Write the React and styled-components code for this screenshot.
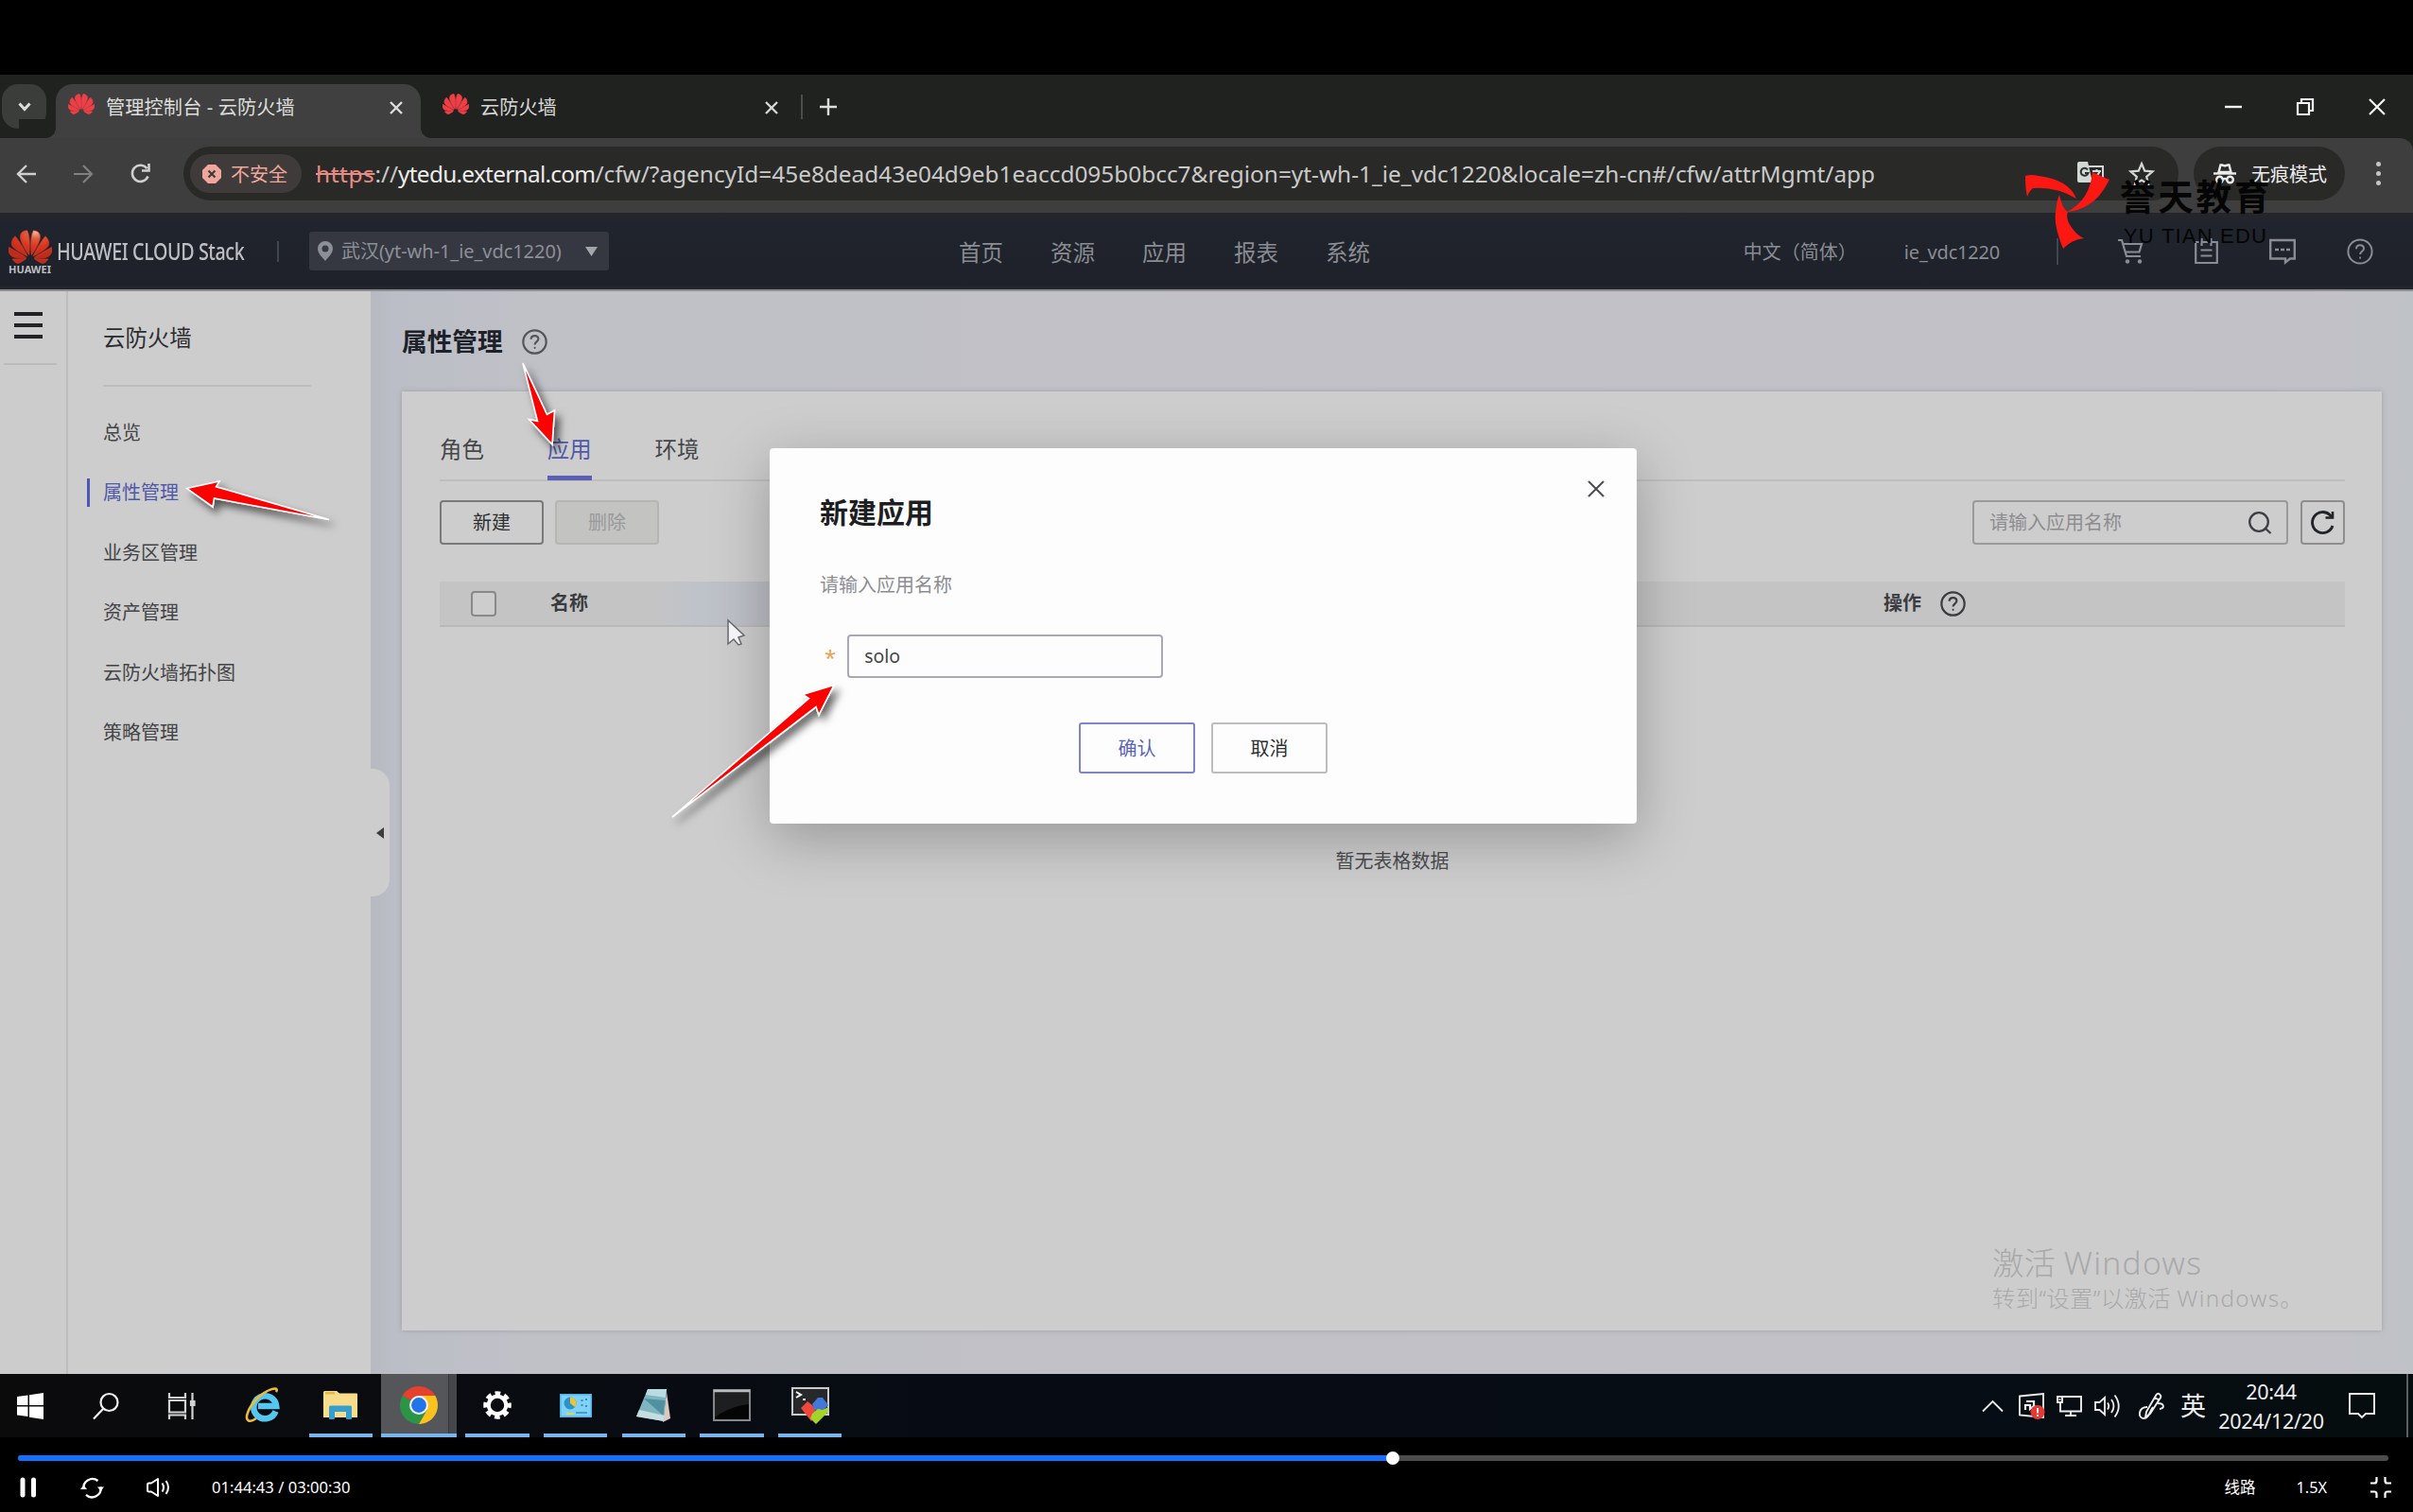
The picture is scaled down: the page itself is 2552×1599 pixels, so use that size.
import React from "react";
import styled, { createGlobalStyle, css } from "styled-components";
import { SiHuawei } from "react-icons/si";

const Global = createGlobalStyle`
  *, *::before, *::after { box-sizing: border-box; }
  html, body { margin: 0; padding: 0; background: #000; overflow: hidden; }
  body { font-family: "Noto Sans", "Noto Sans CJK SC", sans-serif; }
`;

const Screen = styled.div`
  position: relative;
  width: 2552px;
  height: 1599px;
  padding-top: 79px;
  background: #000;
  display: flex;
  flex-direction: column;
  overflow: hidden;
`;

const Label = styled.span`
  font-size: ${(p) => p.$size || 20}px;
  line-height: 1.4;
  font-weight: ${(p) => p.$weight || 400};
  color: ${(p) => p.$color || "inherit"};
  letter-spacing: ${(p) => p.$spacing || 0}px;
  margin-left: ${(p) => p.$before || 0}px;
  margin-top: ${(p) => p.$above || 0}px;
  white-space: nowrap;
  flex: none;
`;

const Icon = styled.svg.attrs({ fill: "none", stroke: "currentColor" })`
  flex: none;
  display: block;
  overflow: visible;
  margin-left: ${(p) => p.$before || 0}px;
`;

/* ---------- browser ---------- */

const TabStrip = styled.div`
  height: 67px;
  flex: none;
  padding: 10px 29px 0 2px;
  background: #202220;
  display: flex;
  align-items: flex-start;
  color: #dcdedc;
`;

const TabSearch = styled.div`
  width: 47px;
  height: 47px;
  border-radius: 17px;
  background: #3b3d3b;
  display: grid;
  place-items: center;
  margin-right: 10px;
`;

const BrowserTab = styled.div`
  position: relative;
  width: ${(p) => p.$width}px;
  height: 57px;
  padding: 0 ${(p) => p.$right}px 8px ${(p) => p.$left}px;
  display: flex;
  align-items: center;
  gap: 12px;
  color: #d6d7d6;
  ${(p) =>
    p.$active &&
    css`
      background: #3f403f;
      border-radius: 18px 18px 0 0;
      color: #dddddc;
      &::before,
      &::after {
        content: "";
        position: absolute;
        bottom: 0;
        width: 10px;
        height: 10px;
      }
      &::before {
        left: -10px;
        background: radial-gradient(circle at 0 0, transparent 9.5px, #3f403f 10px);
      }
      &::after {
        right: -10px;
        background: radial-gradient(circle at 100% 0, transparent 9.5px, #3f403f 10px);
      }
    `}
`;

const Favicon = styled(SiHuawei)`
  width: 28px;
  height: 30px;
  color: #ee3f46;
  stroke: #ee3f46;
  stroke-width: 0.7;
  flex: none;
  margin-top: -8px;
`;

const Push = styled.span`
  margin-left: auto;
`;

const StripDivider = styled.i`
  width: 2px;
  height: 26px;
  margin: 11px 18px 0 0;
  background: #4b4d4b;
`;

const StripButton = styled.div`
  height: 47px;
  display: grid;
  place-items: center;
`;

const WindowButtons = styled.div`
  margin-left: auto;
  height: 47px;
  display: flex;
  align-items: center;
  gap: 58px;
  color: #f4f5f4;
`;

const Toolbar = styled.div`
  height: 79px;
  flex: none;
  padding: 9px 34px 0 18px;
  background: #3d3e3d;
  display: flex;
  align-items: flex-start;
  border-top-right-radius: 14px;
  box-shadow: 20px -20px 0 0 #202220;
`;

const NavButtons = styled.div`
  width: 176px;
  height: 57px;
  display: flex;
  align-items: center;
  gap: 40px;
  color: #cfcfce;
`;

const AddressBar = styled.div`
  width: 2110px;
  height: 57px;
  border-radius: 29px;
  background: #292928;
  padding: 0 26px 0 7px;
  display: flex;
  align-items: center;
`;

const SecurityChip = styled.div`
  width: 118px;
  height: 41px;
  border-radius: 21px;
  background: #3e3b3a;
  color: #f1a69c;
  display: flex;
  align-items: center;
  padding-left: 13px;
  gap: 10px;
  margin-right: 15px;
`;

const Url = styled.div`
  font-size: 24.4px;
  line-height: 1.3;
  white-space: nowrap;
  color: #c9c9c8;
  s { color: #e78c83; letter-spacing: 0.6px; }
  b { font-weight: 400; color: #ececeb; letter-spacing: -0.72px; }
`;

const AddressIcons = styled.div`
  margin-left: auto;
  display: flex;
  align-items: center;
  gap: 27px;
  color: #d4d8d5;
`;

const Incognito = styled.div`
  width: 160px;
  height: 57px;
  margin-left: 16px;
  border-radius: 29px;
  background: #292928;
  color: #ececec;
  display: flex;
  align-items: center;
  padding-left: 21px;
  gap: 16px;
`;

const MenuDots = styled.div`
  height: 57px;
  margin-left: auto;
  display: flex;
  flex-direction: column;
  justify-content: center;
  gap: 5px;
  i { width: 5px; height: 5px; border-radius: 50%; background: #c4c6c4; }
`;

/* ---------- console header ---------- */

const Header = styled.header`
  height: 83px;
  flex: none;
  display: flex;
  align-items: center;
  background: linear-gradient(#25262b 0, #20242c 12px, #1e2129 76px, #24272d);
  border-bottom: 2px solid #8c8d91;
  color: #898c92;
`;

const Brand = styled.div`
  width: 293px;
  padding-left: 8px;
  display: flex;
  align-items: center;
  gap: 5px;
  color: #bdbfc3;
`;

const BrandMark = styled.div`
  width: 47px;
  flex: none;
  display: flex;
  flex-direction: column;
  align-items: center;
  svg.flower { width: 46px; height: 46px; margin: -1px 0 -7px; }
`;

const BrandName = styled.span`
  width: 200px;
  font-size: 26px;
  line-height: 1.4;
  font-weight: 500;
  letter-spacing: -0.5px;
  white-space: nowrap;
  transform: scaleX(0.757);
  transform-origin: left center;
`;

const HeaderRule = styled.i`
  width: 2px;
  height: ${(p) => p.$height}px;
  background: #41454d;
`;

const RegionSelect = styled.div`
  width: 317px;
  height: 41px;
  margin-left: 32px;
  padding: 0 12px 0 9px;
  border-radius: 3px;
  background: #353841;
  color: #8d8f96;
  display: flex;
  align-items: center;
`;

const MainNav = styled.nav`
  margin-left: 370px;
  padding-top: 4px;
  display: flex;
  gap: 50px;
`;

const HeaderRight = styled.div`
  margin-left: auto;
  padding-right: 42px;
  display: flex;
  align-items: center;
`;

const UserName = styled.span`
  margin: 1px 60px 0 50px;
  font-size: 20px;
  letter-spacing: -0.2px;
`;

const HeaderIcons = styled.div`
  margin-left: 63px;
  display: flex;
  align-items: center;
  gap: 54px;
`;

/* ---------- workspace ---------- */

const Workspace = styled.div`
  height: 1145px;
  flex: none;
  display: flex;
  position: relative;
  background: #c1c1c5;
`;

const Rail = styled.div`
  width: 72px;
  border-right: 2px solid #bdbdbd;
  background: #cbcccb;
  padding: 22px 10px 0 4px;
`;

const Burger = styled.div`
  height: 56px;
  padding-left: 11px;
  border-bottom: 2px solid #bbb;
  display: flex;
  flex-direction: column;
  gap: 8px;
  i { width: 30px; height: 4px; background: #232325; }
`;

const Sidebar = styled.aside`
  position: relative;
  width: 320px;
  background: #cdcdcd;
  padding: 0 0 0 20px;
`;

const SidebarTitle = styled.div`
  height: 101px;
  width: 220px;
  margin-left: 17px;
  border-bottom: 2px solid #bebebe;
  display: flex;
  align-items: center;
  color: #2b2c30;
`;

const SideMenu = styled.div`
  padding-top: 17px;
`;

const SideItem = styled.div`
  height: 63.5px;
  display: flex;
  align-items: center;
  gap: 14px;
  color: ${(p) => (p.$active ? "#5059a8" : "#434447")};
  &::before {
    content: "";
    width: 3px;
    height: 30px;
    background: ${(p) => (p.$active ? "#4d56b4" : "transparent")};
  }
`;

const CollapseHandle = styled.div`
  position: absolute;
  left: 319px;
  top: 505px;
  width: 21px;
  height: 135px;
  border-radius: 0 18px 18px 0;
  background: #cdcdcd;
  display: flex;
  align-items: center;
  justify-content: center;
  color: #3b3c3e;
`;

const Main = styled.main`
  flex: 1;
  padding: 0 33px;
  background: linear-gradient(90deg, #b6b9c0 0, #bbbec6 24px, #c0c0c7 160px, #c2c1c7 2060px, #bfc2c7 100%);
`;

const PageTitle = styled.div`
  height: 106px;
  display: flex;
  align-items: center;
  gap: 20px;
  color: #1d2129;
  svg { color: #55565a; }
`;

const Panel = styled.section`
  height: 993px;
  padding: 0 39px 0 40px;
  background: #cdcdcd;
  box-shadow: 0 0 5px rgba(90, 90, 100, 0.3);
`;

const PanelTabs = styled.div`
  height: 95px;
  border-bottom: 2px solid #bebebe;
  display: flex;
  align-items: flex-end;
  gap: 67px;
`;

const PanelTab = styled.div`
  height: 66px;
  margin-bottom: -1px;
  padding-top: 5px;
  display: flex;
  align-items: center;
  color: ${(p) => (p.$active ? "#5059a8" : "#45464a")};
  border-bottom: 5px solid ${(p) => (p.$active ? "#5a60b4" : "transparent")};
`;

const Actions = styled.div`
  margin-top: 20px;
  height: 47px;
  display: flex;
  gap: 12px;
`;

const PanelButton = styled.div`
  width: 110px;
  border: 2px solid ${(p) => (p.$disabled ? "#b5b5b3" : "#78797a")};
  border-radius: 4px;
  background: ${(p) => (p.$disabled ? "#c3c3c2" : "transparent")};
  color: ${(p) => (p.$disabled ? "#999" : "#2d2e31")};
  display: grid;
  place-items: center;
`;

const SearchBox = styled.div`
  width: 334px;
  margin-left: auto;
  margin-right: 1px;
  padding: 0 16px;
  border: 2px solid #9a9a9b;
  border-radius: 4px;
  color: #8d8d90;
  display: flex;
  align-items: center;
  justify-content: space-between;
`;

const RefreshButton = styled.div`
  width: 47px;
  border: 2px solid #8e8e8f;
  border-radius: 4px;
  color: #222326;
  display: grid;
  place-items: center;
`;

const TableHead = styled.div`
  height: 48px;
  margin-top: 39px;
  padding-left: 33px;
  background: linear-gradient(90deg, transparent 230px, #bec2c9 275px, #bcbec5 350px, transparent 351px) #c4c4c5;
  border-bottom: 2px solid #b9b9ba;
  display: grid;
  grid-template-columns: 84px 1410px auto;
  align-items: center;
  color: #3b3c40;
`;

const Checkbox = styled.i`
  width: 27px;
  height: 27px;
  border: 2px solid #88898b;
  border-radius: 4px;
  background: #cdcdcd;
`;

const HeadCell = styled.div`
  display: flex;
  align-items: center;
  gap: 20px;
`;

const Empty = styled.div`
  padding-top: 234px;
  text-align: center;
  color: #4b4c4f;
`;

/* ---------- dialog ---------- */

const Dialog = styled.div`
  position: absolute;
  left: 814px;
  top: 474px;
  width: 917px;
  height: 397px;
  padding: 0 53px;
  border-radius: 4px;
  background: #fdfdfe;
  box-shadow: 0 16px 60px rgba(0, 0, 0, 0.26);
  display: flex;
  flex-direction: column;
`;

const DialogHead = styled.div`
  height: 108px;
  display: flex;
  justify-content: space-between;
  align-items: flex-start;
  color: #1d1e21;
  margin-right: -19px;
  > span { margin-top: 47px; }
  > svg { margin-top: 34px; color: #4b4c50; }
`;

const DialogHint = styled.div`
  height: 74px;
  display: flex;
  align-items: center;
  color: #8e8e92;
`;

const Field = styled.div`
  margin-top: 15px;
  height: 46px;
  display: flex;
  align-items: center;
  padding-left: 5px;
  gap: 12px;
`;

const Input = styled.div`
  width: 334px;
  height: 46px;
  padding-left: 16px;
  border: 2px solid #a9a9b6;
  border-radius: 4px;
  color: #45464a;
  display: flex;
  align-items: center;
`;

const DialogButtons = styled.div`
  margin-top: 47px;
  display: flex;
  justify-content: center;
  gap: 17px;
`;

const DialogButton = styled.div`
  width: 123px;
  height: 54px;
  border: 2px solid ${(p) => (p.$primary ? "#7f85c4" : "#bdbdbf")};
  border-radius: 3px;
  color: ${(p) => (p.$primary ? "#5a64b4" : "#2e2f32")};
  display: grid;
  place-items: center;
`;

/* ---------- overlays ---------- */

const Overlay = styled.svg`
  position: absolute;
  left: 0;
  top: 0;
  pointer-events: none;
`;

const Watermark = styled.div`
  position: absolute;
  left: 2242px;
  top: 183px;
  display: flex;
  flex-direction: column;
  color: #050505;
  font-family: "Liberation Sans", "Noto Sans CJK SC", sans-serif;
`;

const Activate = styled.div`
  position: absolute;
  left: 2107px;
  top: 1312px;
  display: flex;
  flex-direction: column;
  color: #a9a9aa;
  font-weight: 300;
  em { font-style: normal; letter-spacing: ${(p) => p.$latin || 1.3}px; }
`;

/* ---------- taskbar ---------- */

const Taskbar = styled.div`
  height: 67px;
  flex: none;
  background: linear-gradient(90deg, #0b0b0c, #070c14 40%, #070d15 80%, #060d0e);
  display: flex;
  align-items: stretch;
  color: #eee;
`;

const TaskSystem = styled.div`
  width: 244px;
  padding-left: 18px;
  display: flex;
  align-items: center;
  gap: 52px;
`;

const TaskApp = styled.div`
  width: ${(p) => p.$width || 67.4}px;
  margin-right: ${(p) => p.$after ?? 15.3}px;
  display: grid;
  place-items: center;
  border-bottom: 4px solid ${(p) => (p.$running ? "#78b4ee" : "transparent")};
  background: ${(p) => (p.$focus ? "linear-gradient(90deg, #54565a 71px, #35373b 71px, #35373b 72px, #45474b 72px)" : "none")};
  padding-top: 3px;
`;

const Tray = styled.div`
  margin-left: auto;
  display: flex;
  align-items: center;
`;

const Clock = styled.div`
  width: 120px;
  margin-left: 9px;
  text-align: center;
  line-height: 31px;
  font-size: 21.5px;
  letter-spacing: -0.3px;
  white-space: nowrap;
`;

const ShowDesktop = styled.div`
  width: 7px;
  height: 67px;
  margin-left: 33px;
  border-left: 2px solid #5b5f61;
`;

/* ---------- player ---------- */

const Player = styled.div`
  height: 79px;
  padding: 19px 26px 0 19px;
  color: #fff;
`;

const Track = styled.div`
  height: 6px;
  border-radius: 3px;
  background: #4d4d4d;
  display: flex;
  align-items: center;
`;

const Played = styled.div`
  height: 6px;
  border-radius: 3px;
  background: #1470ff;
`;

const Knob = styled.i`
  width: 14px;
  height: 14px;
  margin-left: -7px;
  border-radius: 50%;
  background: #fff;
`;

const Controls = styled.div`
  height: 56px;
  display: flex;
  align-items: center;
  padding-left: 2px;
`;

const PlayerRight = styled.div`
  margin-left: auto;
  display: flex;
  align-items: center;
  margin-right: -3px;
`;

const Cross = ({ size = 14, w = 2.4 }) => (
  <Icon width={size} height={size} viewBox={`0 0 ${size} ${size}`} strokeWidth={w}>
    <path d={`M1 1L${size - 1} ${size - 1}M${size - 1} 1L1 ${size - 1}`} />
  </Icon>
);

const Help = ({ size = 28, w = 2 }) => (
  <Icon width={size} height={size} viewBox="0 0 28 28" strokeWidth={w}>
    <circle cx="14" cy="14" r="12.6" />
    <path d="M10 11.2c0-2.4 1.7-3.9 4-3.9s4 1.4 4 3.6c0 2.9-3.9 3-3.9 6.2" />
    <circle cx="14.1" cy="20.6" r="1.1" fill="currentColor" stroke="none" />
  </Icon>
);

const GradientDefs = styled.svg`
  position: absolute;
  width: 0;
  height: 0;
`;

const PetalFlower = styled(SiHuawei)`
  && { fill: url(#petal); }
  stroke: #d2391f;
  stroke-width: 0.35;
`;

const Flower = () => (
  <>
    <GradientDefs>
      <defs>
        <radialGradient id="petal" cx="0.62" cy="0.05" r="0.75">
          <stop offset="0" stopColor="#f0b49a" />
          <stop offset="0.28" stopColor="#dd5a3c" />
          <stop offset="0.6" stopColor="#d93620" />
          <stop offset="1" stopColor="#c22a1c" />
        </radialGradient>
      </defs>
    </GradientDefs>
    <PetalFlower className="flower" />
  </>
);

const sideItems = ["总览", "属性管理", "业务区管理", "资产管理", "云防火墙拓扑图", "策略管理"];
const navItems = ["首页", "资源", "应用", "报表", "系统"];

function Browser() {
  return (
    <>
      <TabStrip>
        <TabSearch>
          <Icon width="14" height="10" viewBox="0 0 14 10" strokeWidth="3"><path d="M1.5 1.5L7 7.5l5.500-6" /></Icon>
        </TabSearch>
        <BrowserTab $active $width={386} $left={13} $right={19}>
          <Favicon />
          <Label $size={20.200} $spacing={0.100}>管理控制台 - 云防火墙</Label>
          <Push><Cross /></Push>
        </BrowserTab>
        <BrowserTab $width={402} $left={23} $right={24}>
          <Favicon />
          <Label $size={20.200}>云防火墙</Label>
          <Push><Cross /></Push>
        </BrowserTab>
        <StripDivider />
        <StripButton>
          <Icon width="18" height="18" viewBox="0 0 18 18" strokeWidth="2.400"><path d="M9 0v18M0 9h18" /></Icon>
        </StripButton>
        <WindowButtons>
          <Icon width="18" height="18" viewBox="0 0 18 18" strokeWidth="2.400"><path d="M0 9h18" /></Icon>
          <Icon width="18" height="18" viewBox="0 0 18 18" strokeWidth="2.200"><path d="M1 5h12v12H1zM5 5V1h12v12h-4" /></Icon>
          <Cross size={18} w={2.2} />
        </WindowButtons>
      </TabStrip>
      <Toolbar>
        <NavButtons>
          <Icon width="20" height="20" viewBox="0 0 20 20" strokeWidth="2.400"><path d="M20 10H1.500M10 1l-9 9 9 9" /></Icon>
          <Icon width="20" height="20" viewBox="0 0 20 20" strokeWidth="2.200" color="#7f8180"><path d="M0 10h18.500M10 1l9 9-9 9" /></Icon>
          <Icon width="21" height="21" viewBox="0 0 21 21" strokeWidth="2.600"><path d="M18.500 13.500A8.600 8.600 0 1 1 17.500 5.300M19.500 0v7.500H12" /></Icon>
        </NavButtons>
        <AddressBar>
          <SecurityChip>
            <Icon width="20" height="20" viewBox="0 0 20 20">
              <path d="M6 0h8l6 6v8l-6 6H6l-6-6V6z" fill="#f1a69c" stroke="none" />
              <path d="M6.500 6.500l7 7M13.500 6.500l-7 7" stroke="#3e3b3a" strokeWidth="2.200" />
            </Icon>
            <Label $above={2}>不安全</Label>
          </SecurityChip>
          <Url>
            <s>https</s>://<b>ytedu.external.com</b>/cfw/?agencyId=45e8dead43e04d9eb1eaccd095b0bcc7&amp;region=yt-wh-1_ie_vdc1220&amp;locale=zh-cn#/cfw/attrMgmt/app
          </Url>
          <AddressIcons>
            <Icon width="28" height="25" viewBox="0 0 28 25" strokeWidth="2">
              <path d="M12 5h15v17H16" />
              <path d="M0 2q0-2 2-2h9l5 22H2q-2 0-2-2z" fill="currentColor" stroke="none" />
              <path d="M11 8.500a4 4 0 1 0 .5 3.500H8" stroke="#2c3030" />
              <path d="M16 10h9M20.500 8v2M23.500 10c-.5 3-3 5-6 6.500" />
            </Icon>
            <Icon width="26" height="26" viewBox="0 0 26 26" strokeWidth="2.200">
              <path d="M13 2l3.200 7.700 8.300.7-6.300 5.400 1.900 8.100L13 19.600l-7.100 4.300 1.900-8.100L1.500 10.400l8.300-.7z" />
            </Icon>
          </AddressIcons>
        </AddressBar>
        <Incognito>
          <Icon width="24" height="22" viewBox="0 0 24 22" strokeWidth="2.400">
            <path d="M7.500 1.500h1.500L12 2.500l3-1h1.500L18.500 9h-13z" />
            <path d="M0 10.500h24" />
            <circle cx="6.500" cy="17" r="3.300" />
            <circle cx="17.500" cy="17" r="3.300" />
            <path d="M10 16.500q2-1 4 0" />
          </Icon>
          <Label $above={2}>无痕模式</Label>
        </Incognito>
        <MenuDots><i /><i /><i /></MenuDots>
      </Toolbar>
    </>
  );
}

function ConsoleHeader() {
  return (
    <Header>
      <Brand>
        <BrandMark>
          <Flower />
          <Label $size={11} $weight={700}>HUAWEI</Label>
        </BrandMark>
        <BrandName>HUAWEI CLOUD Stack</BrandName>
      </Brand>
      <HeaderRule $height={22} />
      <RegionSelect>
        <Icon width="16" height="21" viewBox="0 0 16 21">
          <path fillRule="evenodd" d="M8 0a8 8 0 0 1 8 8c0 5-5 9-8 13C5 17 0 13 0 8a8 8 0 0 1 8-8zm0 4.500a3.500 3.500 0 1 0 0 7 3.500 3.500 0 0 0 0-7z" fill="currentColor" stroke="none" />
        </Icon>
        <Label $before={9} $above={1} $spacing={-0.050}>武汉(yt-wh-1_ie_vdc1220)</Label>
        <Push>
          <Icon width="13" height="10" viewBox="0 0 13 10"><path d="M0 0h13L6.500 10z" fill="#a5a6aa" stroke="none" /></Icon>
        </Push>
      </RegionSelect>
      <MainNav>
        {navItems.map((n) => <Label key={n} $size={23.500}>{n}</Label>)}
      </MainNav>
      <HeaderRight>
        <Label $above={3}>中文（简体）</Label>
        <UserName>ie_vdc1220</UserName>
        <HeaderRule $height={28} />
        <HeaderIcons>
          <Icon width="27" height="27" viewBox="0 0 27 27" strokeWidth="2.200">
            <path d="M0 2h4l5 17h15M5.500 6h19.500l-2.500 8.500H8" />
            <circle cx="10" cy="24.500" r="2.200" fill="currentColor" stroke="none" />
            <circle cx="23" cy="24.500" r="2.200" fill="currentColor" stroke="none" />
          </Icon>
          <Icon width="25" height="27" viewBox="0 0 25 27" strokeWidth="2.200">
            <path d="M1.200 4h22.600v22H1.200zM7.500 0v8M17.500 0v8M6.500 12.500h12M6.500 18.500h12" />
          </Icon>
          <Icon width="28" height="27" viewBox="0 0 28 27" strokeWidth="2.400">
            <path d="M1.200 2h25.600v19.500H22l-5 4v-4H1.200z" />
            <path d="M6 12h4M12 12h4M18 12h4" />
          </Icon>
          <Help />
        </HeaderIcons>
      </HeaderRight>
    </Header>
  );
}

function Console() {
  return (
    <Workspace>
      <Rail><Burger><i /><i /><i /></Burger></Rail>
      <Sidebar>
        <SidebarTitle><Label $size={23.400}>云防火墙</Label></SidebarTitle>
        <SideMenu>
          {sideItems.map((s) => <SideItem key={s} $active={s === "属性管理"}><Label>{s}</Label></SideItem>)}
        </SideMenu>
        <CollapseHandle>
          <Icon width="8" height="12" viewBox="0 0 8 12"><path d="M8 0v12L0 6z" fill="currentColor" stroke="none" /></Icon>
        </CollapseHandle>
      </Sidebar>
      <Main>
        <PageTitle>
          <Label $size={26.700} $weight={700}>属性管理</Label>
          <Help size={27} w={2.300} />
        </PageTitle>
        <Panel>
          <PanelTabs>
            <PanelTab><Label $size={23.400}>角色</Label></PanelTab>
            <PanelTab $active><Label $size={23.400}>应用</Label></PanelTab>
            <PanelTab><Label $size={23.400}>环境</Label></PanelTab>
          </PanelTabs>
          <Actions>
            <PanelButton><Label>新建</Label></PanelButton>
            <PanelButton $disabled><Label>删除</Label></PanelButton>
            <SearchBox>
              <Label>请输入应用名称</Label>
              <Icon width="24" height="24" viewBox="0 0 24 24" strokeWidth="2.300" color="#3d3e41">
                <circle cx="11" cy="11" r="9.800" /><path d="M18 18l5.500 5" />
              </Icon>
            </SearchBox>
            <RefreshButton>
              <Icon width="25" height="25" viewBox="0 0 25 25" strokeWidth="2.900">
                <path d="M23 16A11 11 0 1 1 20 4.500l2.500 2.500" /><path d="M15.500 7.500H23V1" strokeWidth="2.600" />
              </Icon>
            </RefreshButton>
          </Actions>
          <TableHead>
            <Checkbox />
            <HeadCell><Label $weight={700}>名称</Label></HeadCell>
            <HeadCell><Label $weight={700}>操作</Label><Help size={27} w={2.300} /></HeadCell>
          </TableHead>
          <Empty><Label>暂无表格数据</Label></Empty>
        </Panel>
      </Main>
    </Workspace>
  );
}

function CreateDialog() {
  return (
    <Dialog>
      <DialogHead>
        <Label $size={30} $weight={700}>新建应用</Label>
        <Cross size={18} w={2} />
      </DialogHead>
      <DialogHint><Label>请输入应用名称</Label></DialogHint>
      <Field>
        <Label $size={22} $color="#eda04a">*</Label>
        <Input><Label $size={19.500}>solo</Label></Input>
      </Field>
      <DialogButtons>
        <DialogButton $primary><Label $above={2}>确认</Label></DialogButton>
        <DialogButton><Label $above={2}>取消</Label></DialogButton>
      </DialogButtons>
    </Dialog>
  );
}

function TaskbarView() {
  return (
    <Taskbar>
      <TaskSystem>
        <Icon width="28" height="28" viewBox="0 0 28 28">
          <path d="M0 4l11.500-1.600V13H0zM13 2.200L28 0v13H13zM0 14.500h11.500V25L0 23.500zM13 14.500h15V28l-15-2.200z" fill="#fff" stroke="none" />
        </Icon>
        <Icon width="28" height="28" viewBox="0 0 28 28" strokeWidth="2.200">
          <circle cx="17.500" cy="10" r="9" /><path d="M11.500 16.500L1 27.500" />
        </Icon>
        <Icon width="28" height="28" viewBox="0 0 28 28" strokeWidth="2.200" color="#d0d2d3">
          <path d="M1 0v5h17V0M1 28v-4.500h17V28M1 8h17v12.500H1zM25.500 0v28" /><path d="M24 9h3.500v4H24z" fill="currentColor" />
        </Icon>
      </TaskSystem>
      <TaskApp>
        <Icon width="38" height="36" viewBox="0 0 38 36">
          <path d="M32.500 24.500A12 12 0 1 1 33.200 19H14" stroke="#55c6ef" strokeWidth="6.500" />
          <path d="M33 4C37-3 23 1 13 11 4 20-1 32 4 34.500c2 1 5-.5 8-2.500" stroke="#f0bb35" strokeWidth="2.600" />
        </Icon>
      </TaskApp>
      <TaskApp $running $after={8.700}>
        <Icon width="36" height="30" viewBox="0 0 36 30" stroke="none">
          <path d="M0 1.500Q0 0 1.500 0H14l3 2.500h18q1 0 1 1V28H0z" fill="#f7dd8b" stroke="none" />
          <path d="M2 1h10v2.500H2z" fill="#e8b93b" stroke="none" />
          <path d="M6 29V17q0-1.500 1.500-1.500h21Q30 15.500 30 17v12q0 1-1 1h-4q-1 0-1-1v-7H12v7q0 1-1 1H7q-1 0-1-1z" fill="#379fce" stroke="none" />
        </Icon>
      </TaskApp>
      <TaskApp $running $focus $width={80} $after={9.500}>
        <Icon width="40" height="40" viewBox="0 0 40 40">
          <g stroke="none">
            <path d="M20 20L2.700 10A20 20 0 0 1 37.300 10z" fill="#e8402f" />
            <path d="M20 20L2.700 10A20 20 0 0 0 20 40l8.700-15z" fill="#2a9447" />
            <path d="M20 10h17.300A20 20 0 0 1 20 40l8.700-15z" fill="#fbc11c" />
            <circle cx="20" cy="20" r="10" fill="#f4f6f8" />
            <circle cx="20" cy="20" r="7.900" fill="#2374e8" />
          </g>
        </Icon>
      </TaskApp>
      <TaskApp $running>
        <Icon width="30" height="30" viewBox="0 0 30 30">
          <circle cx="15" cy="15" r="12" stroke="#fff" strokeWidth="5.500" strokeDasharray="5.400 4.025" strokeDashoffset="2.700" />
          <circle cx="15" cy="15" r="9.200" stroke="#fff" strokeWidth="4" />
        </Icon>
      </TaskApp>
      <TaskApp $running>
        <Icon width="34" height="25" viewBox="0 0 34 25">
          <g stroke="none">
            <rect width="34" height="25" fill="#4fb3e8" />
            <rect x="1.500" y="1.500" width="31" height="22" fill="#7fd1f6" />
            <circle cx="11" cy="10" r="6.500" fill="#2b93c9" />
            <path d="M11 10V3.500a6.500 6.500 0 0 1 5 10.500z" fill="#efc23a" />
            <path d="M22.500 6h2v2h-2zM27 5h2v2h-2zM22.500 11h2v2h-2zM27 12h2v2h-2z" fill="#3989c9" />
            <path d="M7 20h8v2H7z" fill="#d9d74a" /><path d="M17 19h12v2H17z" fill="#3e9fd5" />
          </g>
        </Icon>
      </TaskApp>
      <TaskApp $running>
        <Icon width="36" height="36" viewBox="0 0 36 36">
          <g stroke="none">
            <path d="M32 4l4 28-8 4z" fill="#d9c9bf" />
            <path d="M12 1h20l-3 34L0 30z" fill="#7fb5c1" />
            <path d="M12 1h20l-1 9-21-3z" fill="#b9dbe2" />
            <path d="M8 11l22 2-1.500 16z" fill="#4f919f" />
            <path d="M0 30l29 5 1-6-27-6z" fill="#c4dde1" />
          </g>
        </Icon>
      </TaskApp>
      <TaskApp $running>
        <Icon width="40" height="34" viewBox="0 0 40 34">
          <rect x="1" y="1" width="38" height="32" fill="#050505" stroke="#85878a" strokeWidth="2" />
          <path d="M2 3h36v13Q18 18 2 30z" fill="#1d1e20" stroke="none" />
          <path d="M1 2h38" stroke="#b9babc" strokeWidth="2.500" />
        </Icon>
      </TaskApp>
      <TaskApp $running>
        <Icon width="40" height="39" viewBox="0 0 40 39">
          <rect x="1" y="1" width="38" height="28" fill="#26282a" stroke="#c8cacb" strokeWidth="2" />
          <path d="M5 5l5 3-5 3M12 13h3" stroke="#fff" strokeWidth="2" />
          <g stroke="none">
            <path d="M10 22l7-7 5 4 3 5 4 4-8 8z" fill="#ee473c" />
            <path d="M22 18l6-7 5 0 6 8-6 6-9-1z" fill="#4377d8" />
            <path d="M22 28l6-5 5 1 6-3-1 6-12 12-6-6z" fill="#a2d42a" />
          </g>
        </Icon>
      </TaskApp>
      <Tray>
        <Icon width="21" height="12" viewBox="0 0 21 12" strokeWidth="1.800"><path d="M0 11.500L10.500 1 21 11.500" /></Icon>
        <Icon $before={17} width="27" height="27" viewBox="0 0 27 27" strokeWidth="1.800">
          <path d="M1 3.500L26 1v25L1 23.500z" />
          <path d="M7 18v-5h5v4l5-4M8 9h8v5" strokeWidth="2.200" />
          <circle cx="20" cy="20.500" r="7.500" fill="#e23a36" stroke="none" />
          <path d="M20 16v5.500M20 23v2" stroke="#fff" strokeWidth="1.800" />
        </Icon>
        <Icon $before={13} width="27" height="23" viewBox="0 0 27 23" strokeWidth="1.900">
          <path d="M7 2h19v15.500H4V9M15 17.500V22M9 22h12M1 2h5v6H1zM3.500 4v2" />
        </Icon>
        <Icon $before={13} width="27" height="26" viewBox="0 0 27 26" strokeWidth="1.800">
          <path d="M1 9h4.500L11 4v18l-5.500-5H1zM14 9.500q2.500 3.500 0 7M18 6q5 7 0 14M21.500 1.500q8.500 11.500 0 23" />
        </Icon>
        <Icon $before={20} width="27" height="28" viewBox="0 0 27 28" strokeWidth="1.900">
          <path d="M8 20L18.500 2q1.500-2 3.500-.5t1 3.500L12 22l-5 4zM17 5l5 3M9 15C-1 15-1 27 5 27c6 0 6-7 10-12M20 11c8 0 7 6 2 6" />
        </Icon>
        <Label $before={17} $size={27}>英</Label>
        <Clock>20:44<br />2024/12/20</Clock>
        <Icon $before={22} width="28" height="27" viewBox="0 0 28 27" strokeWidth="1.900">
          <path d="M1 1h26v21h-9l-4 4-4-4H1z" />
        </Icon>
        <ShowDesktop />
      </Tray>
    </Taskbar>
  );
}

function PlayerBar() {
  return (
    <Player>
      <Track><Played style={{ width: "58%" }} /><Knob /></Track>
      <Controls>
        <Icon width="18" height="22" viewBox="0 0 18 22" strokeWidth="5" strokeLinecap="round"><path d="M3 3v16M14.500 3v16" /></Icon>
        <Icon $before={46} width="25" height="23" viewBox="0 0 25 23" strokeWidth="2.300">
          <path d="M3.500 12.500A9.300 9.300 0 0 1 18.500 4M6 18.800a9.300 9.300 0 0 0 15.500-8.300" />
          <path d="M0 13h7l-3.500-4.500zM18 10.500h7L21.500 15z" fill="currentColor" stroke="none" />
        </Icon>
        <Icon $before={45} width="25" height="20" viewBox="0 0 25 20" strokeWidth="2" strokeLinejoin="round">
          <path d="M1 7q0-1.500 1.500-1.500H5L12 1v18l-7-4.500H2.500Q1 14.500 1 13zM16.500 5.500q3 4.500 0 9M20.500 3q5 7 0 14" />
        </Icon>
        <Label $before={44} $size={16.600}>01:44:43 / 03:00:30</Label>
        <PlayerRight>
          <Label $size={16.500}>线路</Label>
          <Label $before={43} $size={16.300}>1.5X</Label>
          <Icon $before={46} width="22" height="22" viewBox="0 0 22 22" strokeWidth="2.200">
            <path d="M6.500 0v4q0 2.500-2.500 2.500H0M15.500 0v4q0 2.500 2.500 2.500h4M6.500 22v-4q0-2.500-2.500-2.500H0M15.500 22v-4q0-2.500 2.500-2.500h4" />
          </Icon>
        </PlayerRight>
      </Controls>
    </Player>
  );
}

function Annotations() {
  return (
    <Overlay width="2552" height="1599" viewBox="0 0 2552 1599">
      <defs>
        <filter id="drop" x="-20%" y="-20%" width="150%" height="150%">
          <feDropShadow dx="5" dy="6" stdDeviation="4" floodColor="#000" floodOpacity="0.6" />
        </filter>
      </defs>
      <path d="M770 656v25l6-5 5 6 3-1-3-7 6-2z" fill="#f3f3f6" stroke="#66676d" strokeWidth="1.500" />
      <g fill="#fd0000" stroke="#fff" strokeWidth="1.600" filter="url(#drop)">
        <path d="M553 384L578.500 438.500 586.500 434 584 470 559.500 443.500 568.500 445.500z" />
        <path d="M197.500 516.500L232 509l-3.500 5.700L348 549.500 226.500 527 225 536z" />
        <path d="M882 724.500L849 734.500l6.500 4L711 864l152-116.500 3 8.500z" />
      </g>
      <g fill="#fb1712">
        <path d="M2142 186q6-2 14 0 32 4 40 24-22-13-46-11-4 3-6 9-2-8-2-22z" />
        <path d="M2213 182q8 4 18 8-10 20-23 27-10 6-22 7 24-12 27-42z" />
        <path d="M2178 206q3 15 9 18-3 8 5 18 5 7 12 10-12 1-22 11-10-24-8-38 1-12 4-19z" />
      </g>
    </Overlay>
  );
}

export default function App() {
  return (
    <Screen>
      <Global />
      <Browser />
      <ConsoleHeader />
      <Console />
      <TaskbarView />
      <PlayerBar />
      <Activate>
        <Label $size={33.500} $weight={300}>激活 <em>Windows</em></Label>
        <Label $above={-3} $size={24.300} $weight={300} $spacing={0.400}>转到“设置”以激活 <em>Windows</em>。</Label>
      </Activate>
      <CreateDialog />
      <Annotations />
      <Watermark>
        <Label $size={37.500} $weight={700} $spacing={2.800}>誉天教育</Label>
        <Label $before={4} $above={-1} $size={22} $spacing={1.200}>YU TIAN EDU</Label>
      </Watermark>
    </Screen>
  );
}
